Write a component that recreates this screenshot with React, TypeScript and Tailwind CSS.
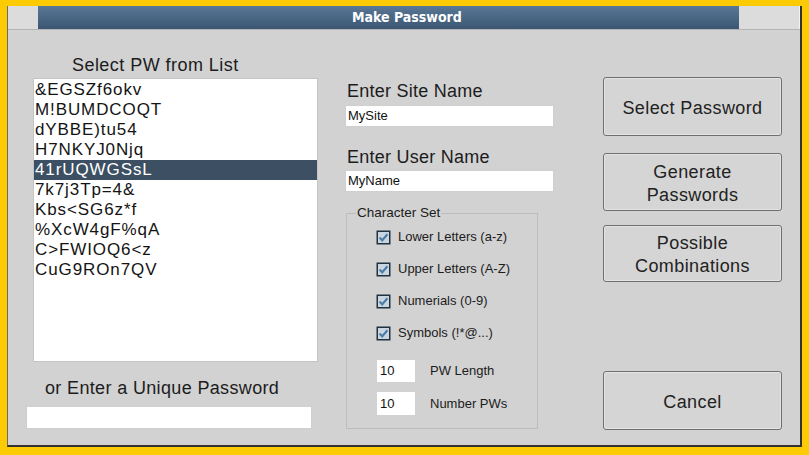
const PASSWORDS = [
  '&EGSZf6okv',
  'M!BUMDCOQT',
  'dYBBE)tu54',
  'H7NKYJ0Njq',
  '41rUQWGSsL',
  '7k7j3Tp=4&',
  'Kbs<SG6z*f',
  '%XcW4gF%qA',
  'C>FWIOQ6<z',
  'CuG9ROn7QV',
]

const CHARSETS = [
  'Lower Letters (a-z)',
  'Upper Letters (A-Z)',
  'Numerials (0-9)',
  'Symbols (!*@...)',
]

function CheckBox() {
  return (
    <svg width="15" height="15" viewBox="0 0 15 15" className="shrink-0">
      <rect x="0.5" y="0.5" width="14" height="14" fill="#203040" />
      <rect x="2" y="2" width="11" height="11" fill="#c9d5df" />
      <path d="M3.6 7.6 L6.2 10.4 L11.4 4.2" fill="none" stroke="#4a7ea8" strokeWidth="2.2" />
    </svg>
  )
}

function Button({ children }: { children: React.ReactNode }) {
  return (
    <div className="flex w-[179px] items-center justify-center rounded-[3px] border border-[#6f6f6f] bg-[#d5d5d5] pt-[3px] text-center text-[18px] leading-[23px] tracking-[0.4px] text-[#222] shadow-[inset_0_0_0_1px_#e4e4e4]">
      {children}
    </div>
  )
}

export default function App() {
  return (
    <div className="h-[455px] w-[809px] overflow-hidden bg-[#fdcb04] pl-[7px] pt-[6px] font-['Liberation_Sans',Arial,sans-serif]">
      <div className="flex h-[441px] w-[795px] flex-col border-b-2 border-l border-r-2 border-b-[#333] border-l-[#6a6a6a] border-r-[#333] bg-[#d2d2d2]">
        {/* title strip */}
        <div className="flex h-[24px] border-b border-[#b4b4b4] bg-[#dcdcdc]">
          <div className="w-[30px]" />
          <div className="flex w-[701px] items-center bg-gradient-to-b from-[#5a7896] to-[#3a5672]">
            <span className="ml-[314px] font-['DejaVu_Sans_Condensed','Liberation_Sans_Narrow',sans-serif] text-[14px] font-bold text-white">
              Make Password
            </span>
          </div>
          <div className="flex-1 border-r border-[#f2f2f2]" />
        </div>

        <div className="flex items-start">
          {/* left column */}
          <div className="ml-[18px] flex w-[292px] flex-col">
            <div className="ml-[46px] mt-[25px] text-[18px] leading-[20px] tracking-[0.45px] text-[#1c1c1c]">Select PW from List</div>
            <div className="ml-[7px] mt-[3px] h-[284px] w-[285px] border border-[#c4c4c4] bg-white pt-[1px]">
              {PASSWORDS.map((pw, i) => (
                <div
                  key={pw}
                  className={
                    i === 4
                      ? 'h-[20px] bg-[#3c4f63] pl-[1px] text-[17px] leading-[20px] tracking-[0.9px] text-white'
                      : 'h-[20px] pl-[1px] text-[17px] leading-[20px] tracking-[0.9px] text-[#141414]'
                  }
                >
                  {pw}
                </div>
              ))}
            </div>
            <div className="ml-[19px] mt-[16px] text-[18px] leading-[20px] tracking-[0.35px] text-[#1c1c1c]">or Enter a Unique Password</div>
            <div className="mt-[8px] h-[23px] w-[286px] border border-[#cfcfcf] bg-white" />
          </div>

          {/* middle column */}
          <div className="ml-[27px] flex w-[209px] flex-col">
            <div className="ml-[2px] mt-[51px] text-[18px] leading-[20px] tracking-[0.25px] text-[#1c1c1c]">Enter Site Name</div>
            <div className="mt-[4px] flex h-[22px] items-center border border-[#cfcfcf] bg-white pl-[2px] text-[13px] text-[#111]">
              MySite
            </div>
            <div className="ml-[2px] mt-[20px] text-[18px] leading-[20px] tracking-[0.25px] text-[#1c1c1c]">Enter User Name</div>
            <div className="mt-[3px] flex h-[22px] items-center border border-[#cfcfcf] bg-white pl-[2px] text-[13px] text-[#111]">
              MyName
            </div>
            <fieldset className="ml-[1px] mt-[13px] h-[224px] w-[192px] border border-[#bdbdbd]">
              <legend className="ml-[9px] px-[1px] text-[13.5px] leading-[16px] text-[#1c1c1c]">Character Set</legend>
              <div className="flex flex-col pl-[29px]">
                {CHARSETS.map((c) => (
                  <div key={c} className="flex h-[32px] items-center gap-[7px] text-[13px] text-[#1c1c1c]">
                    <CheckBox />
                    <span>{c}</span>
                  </div>
                ))}
                <div className="mt-[11px] flex items-center">
                  <div className="ml-[1px] flex h-[22px] w-[38px] items-center bg-white pl-[3px] text-[13px] text-[#111]">10</div>
                  <span className="ml-[15px] text-[13px] text-[#1c1c1c]">PW Length</span>
                </div>
                <div className="mt-[10px] flex items-center">
                  <div className="ml-[1px] flex h-[23px] w-[38px] items-center bg-white pl-[3px] text-[13px] text-[#111]">10</div>
                  <span className="ml-[15px] text-[13px] text-[#1c1c1c]">Number PWs</span>
                </div>
              </div>
            </fieldset>
          </div>

          {/* right column */}
          <div className="ml-[49px] flex flex-col">
            <div className="mt-[47px] flex h-[59px]">
              <Button>Select Password</Button>
            </div>
            <div className="mt-[17px] flex h-[58px]">
              <Button>
                Generate
                <br />
                Passwords
              </Button>
            </div>
            <div className="mt-[14px] flex h-[57px]">
              <Button>
                Possible
                <br />
                Combinations
              </Button>
            </div>
            <div className="mt-[89px] flex h-[59px]">
              <Button>Cancel</Button>
            </div>
          </div>
        </div>
      </div>
    </div>
  )
}
